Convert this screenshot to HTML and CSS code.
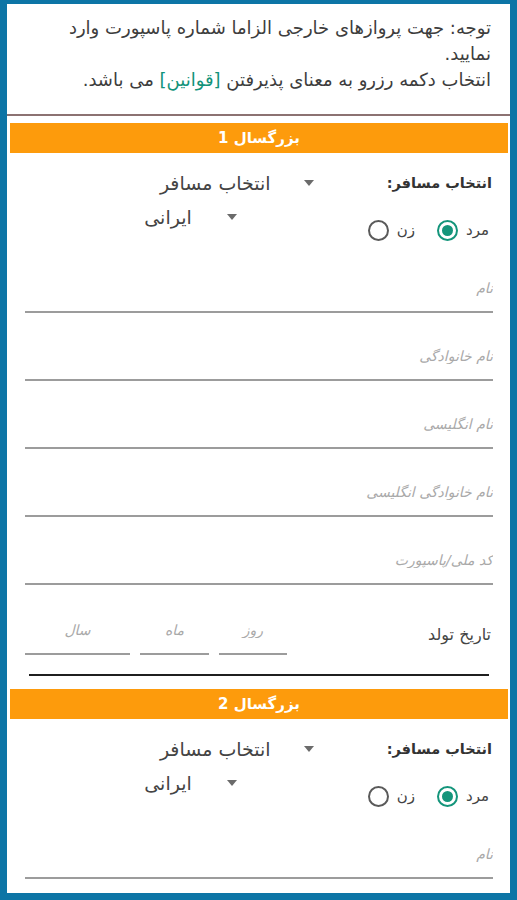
FILE: index.html
```html
<!DOCTYPE html>
<html lang="fa" dir="rtl">
<head>
  <meta charset="UTF-8" />
  <meta name="viewport" content="width=device-width, initial-scale=1.0"/>
  <title>مشخصات مسافران</title>
  <link rel="stylesheet" href="styles.css">
</head>
<body>

  <div class="page">
    <div class="notice">
      <p>توجه: جهت پروازهای خارجی الزاما شماره پاسپورت وارد نمایید.</p>
      <p>انتخاب دکمه رزرو به معنای پذیرفتن <a href="#" class="rules">[قوانین]</a> می باشد.</p>
    </div>

    <div class="passenger">
      <h3 class="passenger-title">بزرگسال 1</h3>
      <div class="passenger-body">
        <div class="row row-top">
          <span class="row-label">انتخاب مسافر:</span>
          <div class="select select-passenger">
            <svg class="caret" width="10" height="6" viewBox="0 0 10 6"><path d="M0 0h10L5 6z" fill="#6b6b6b"/></svg>
            <span>انتخاب مسافر</span>
          </div>
        </div>
        <div class="row row-second">
          <div class="gender">
            <label class="radio"><span>مرد</span><span class="circle checked"></span></label>
            <label class="radio"><span>زن</span><span class="circle"></span></label>
          </div>
          <div class="select select-nation">
            <svg class="caret" width="10" height="6" viewBox="0 0 10 6"><path d="M0 0h10L5 6z" fill="#6b6b6b"/></svg>
            <span>ایرانی</span>
          </div>
        </div>

        <input class="field" type="text" placeholder="نام">
        <input class="field" type="text" placeholder="نام خانوادگی">
        <input class="field" type="text" placeholder="نام انگلیسی">
        <input class="field" type="text" placeholder="نام خانوادگی انگلیسی">
        <input class="field" type="text" placeholder="کد ملی/پاسپورت">

        <div class="birth">
          <span class="birth-label">تاریخ تولد</span>
          <input class="field field-day" type="text" placeholder="روز">
          <input class="field field-month" type="text" placeholder="ماه">
          <input class="field field-year" type="text" placeholder="سال">
        </div>
        <hr class="sep">
      </div>
    </div>

    <div class="passenger">
      <h3 class="passenger-title">بزرگسال 2</h3>
      <div class="passenger-body">
        <div class="row row-top">
          <span class="row-label">انتخاب مسافر:</span>
          <div class="select select-passenger">
            <svg class="caret" width="10" height="6" viewBox="0 0 10 6"><path d="M0 0h10L5 6z" fill="#6b6b6b"/></svg>
            <span>انتخاب مسافر</span>
          </div>
        </div>
        <div class="row row-second">
          <div class="gender">
            <label class="radio"><span>مرد</span><span class="circle checked"></span></label>
            <label class="radio"><span>زن</span><span class="circle"></span></label>
          </div>
          <div class="select select-nation">
            <svg class="caret" width="10" height="6" viewBox="0 0 10 6"><path d="M0 0h10L5 6z" fill="#6b6b6b"/></svg>
            <span>ایرانی</span>
          </div>
        </div>

        <input class="field" type="text" placeholder="نام">
        <input class="field" type="text" placeholder="نام خانوادگی">
      </div>
    </div>
  </div>

</body>
</html>
```

FILE: styles.css
```css
body {
  margin: 0;
  padding: 4px 7px 7px;
  background: #0d75a6;
  font-family: 'DejaVu Sans', 'Noto Sans', sans-serif;
  color: #3d3d3d;
}

.page {
  background: #fff;
  height: 889px;
  overflow: hidden;
}

.notice {
  padding: 11px 19px 0 14px;
  height: 99px;
  border-bottom: 2px solid #8c7272;
  font-size: 18px;
  line-height: 26px;
}

.notice p {
  margin: 0;
}

.rules {
  color: #12937a;
  text-decoration: none;
}

.passenger {
  margin-top: 7px;
}

.passenger + .passenger {
  margin-top: 13px;
}

.passenger-title {
  margin: 0 2px 0 3px;
  height: 30px;
  line-height: 30px;
  background: #fd9b0c;
  color: #fff;
  font-size: 15px;
  font-weight: bold;
  text-align: center;
}

.passenger-body {
  padding: 15px 17px 0 18px;
}

.row {
  display: flex;
  align-items: center;
}

.row-top {
  height: 30px;
}

.row-label {
  font-size: 14.5px;
  font-weight: bold;
  color: #333;
  margin-right: 1px;
}

.select {
  display: flex;
  align-items: center;
  gap: 33px;
  font-size: 19px;
  color: #444;
}

.select-passenger {
  margin-right: 73px;
}

.row-second {
  height: 37px;
  align-items: flex-end;
  margin-top: 7px;
}

.select-nation {
  align-self: flex-start;
  height: 24px;
  margin-right: 131px;
  gap: 35px;
}

.gender {
  display: flex;
  align-items: center;
  gap: 22px;
  height: 24px;
  margin-right: 4px;
}

.radio {
  display: flex;
  align-items: center;
  gap: 8px;
  font-size: 15px;
  color: #444;
}

.circle {
  width: 17px;
  height: 17px;
  border: 2px solid #5a5a5a;
  border-radius: 50%;
  position: relative;
}

.circle.checked {
  border-color: #14957b;
}

.circle.checked::after {
  content: "";
  position: absolute;
  top: 3px;
  left: 3px;
  width: 11px;
  height: 11px;
  border-radius: 50%;
  background: #14957b;
}

.field {
  display: block;
  box-sizing: border-box;
  width: 100%;
  height: 46px;
  margin: 22px 0 0;
  padding: 0 0 2px;
  border: none;
  border-bottom: 2px solid #9c9c9c;
  background: transparent;
  font-family: inherit;
  font-size: 14px;
  direction: rtl;
  outline: none;
}

.field:first-of-type {
  margin-top: 25px;
}

.field::placeholder {
  color: #a9a9a9;
  font-style: italic;
}

.birth {
  display: flex;
  align-items: flex-end;
  gap: 10px;
}

.birth .field {
  margin-top: 24px;
  text-align: center;
}

.birth-label {
  flex: 1;
  font-size: 16px;
  color: #444;
  padding-bottom: 11px;
  margin-right: 2px;
}

.field-day {
  width: 68px;
  flex: none;
}

.field-month {
  width: 69px;
  flex: none;
}

.field-year {
  width: 105px;
  flex: none;
}

.sep {
  margin: 19px 4px 0;
  border: none;
  border-top: 2px solid #1f1f1f;
}
```
